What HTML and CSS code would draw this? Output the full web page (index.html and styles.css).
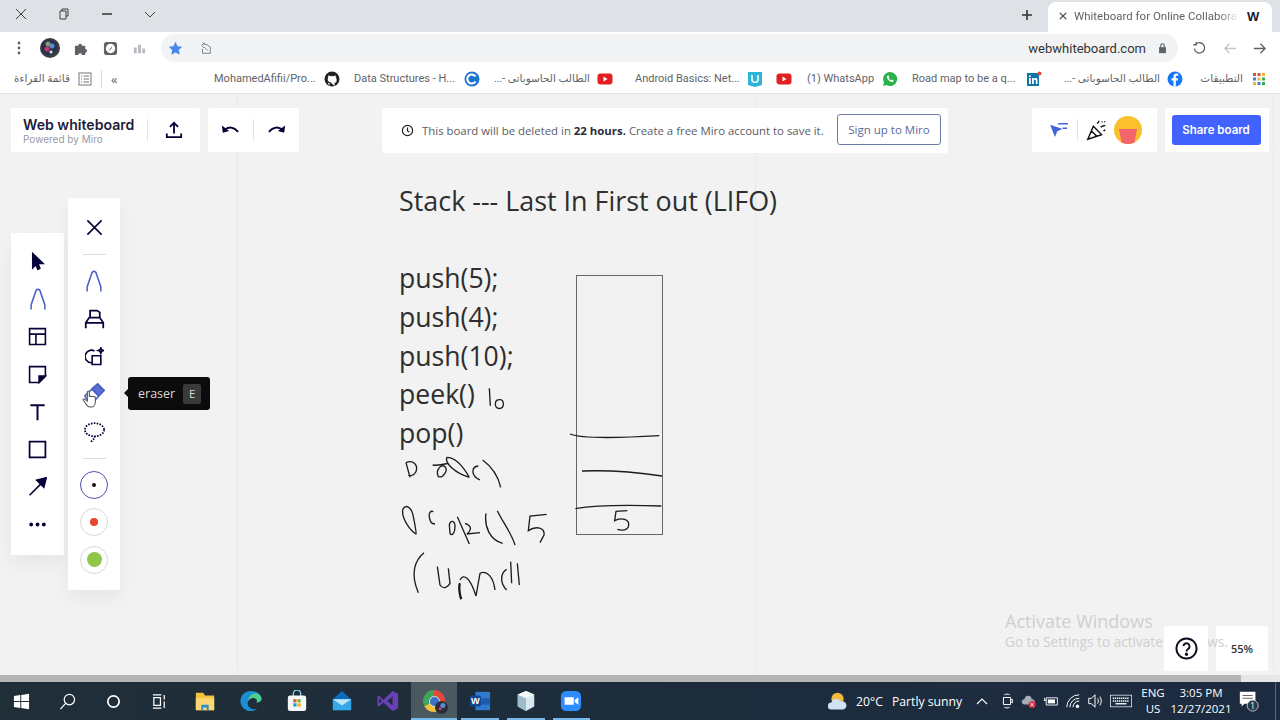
FILE: index.html
```html
<!DOCTYPE html>
<html lang="en">
<head>
  <meta charset="UTF-8">
  <title>Whiteboard for Online Collaboration</title>
  <link rel="stylesheet" href="styles.css">
</head>
<body>
  <div class="tabstrip">
    <div class="win-btns">
      <svg class="win-btn" viewBox="0 0 12 12"><path d="M1 1l10 10M11 1L1 11" /></svg>
      <svg class="win-btn" viewBox="0 0 12 12"><path d="M2 3h6v8H2zM4 3V1h6v7H8" /></svg>
      <svg class="win-btn" viewBox="0 0 12 12"><path d="M1 6h10" stroke-width="1.6" /></svg>
      <svg class="win-btn" viewBox="0 0 12 12"><path d="M1 4l5 5 5-5" /></svg>
    </div>
    <svg class="new-tab" viewBox="0 0 12 12"><path d="M6 1v10M1 6h10" /></svg>
    <div class="tab">
      <svg class="tab-close" viewBox="0 0 10 10"><path d="M1 1l8 8M9 1L1 9" /></svg>
      <span class="tab-title">Whiteboard for Online Collabora</span>
      <b class="tab-icon">W</b>
    </div>
  </div>

  <div class="toolbar">
    <svg class="kebab" viewBox="0 0 4 16"><circle cx="2" cy="3" r="1.4" /><circle cx="2" cy="8" r="1.4" /><circle cx="2" cy="13" r="1.4" /></svg>
    <div class="avatar"></div>
    <svg class="ext ext-puzzle" viewBox="0 0 16 16"><path d="M1 5h3.5a2 2 0 1 1 4 0H12v3.500a2 2 0 1 1 0 4V15H8.500a2 2 0 1 0-4 0H1z" /></svg>
    <svg class="ext ext-safari" viewBox="0 0 16 16"><rect x="1" y="1" width="14" height="14" rx="3" fill="#5f6368" /><circle cx="8" cy="8" r="5" fill="#fff" /><path d="M10 5L7 8.500 6 11l3-3z" fill="#777" /></svg>
    <svg class="ext ext-bars" viewBox="0 0 16 16"><path d="M2 7h3v6H2zM6.500 4h3v9h-3zM11 8h3v5h-3z" fill="#b5b9bd" /></svg>
    <div class="omnibox">
      <svg class="star" viewBox="0 0 16 16"><path d="M8 .8l2.200 4.700 5 .6-3.700 3.500 1 5.100L8 12.200l-4.500 2.500 1-5.100L.8 6.100l5-.6z" /></svg>
      <svg class="omni-share" viewBox="0 0 16 16"><path d="M3 5l3-3v2h3l4 3v7H4V9M6 8L3 5M6 7l4 4" /></svg>
      <span class="url">webwhiteboard.com</span>
      <svg class="lock" viewBox="0 0 12 14"><path d="M2 6h8v7H2z" fill="#5f6368" /><path d="M4 6V4a2 2 0 0 1 4 0v2" fill="none" stroke="#5f6368" stroke-width="1.3" /></svg>
    </div>
    <svg class="nav nav-reload" viewBox="0 0 16 16"><path d="M4 3.500A5.500 5.500 0 1 1 2.500 8M4.500 1v3H1.500" /></svg>
    <svg class="nav nav-back" viewBox="0 0 16 16"><path d="M14 8H2M7 3L2 8l5 5" /></svg>
    <svg class="nav nav-fwd" viewBox="0 0 16 16"><path d="M2 8h12M9 3l5 5-5 5" /></svg>
  </div>

  <div class="bookmarks">
    <span class="bm-text bm-reading" dir="rtl" lang="ar">قائمة القراءة</span>
    <svg class="bm-list" viewBox="0 0 14 14"><rect x="1" y="1" width="12" height="12" fill="none" stroke="#777" /><path d="M3 4h1M5.500 4H11M3 7h1M5.500 7H11M3 10h1M5.500 10H11" stroke="#777" /></svg>
    <i class="bm-sep"></i>
    <span class="bm-more">«</span>
    <span class="bm-text bm-1">MohamedAfifii/Pro...</span>
    <svg class="bm-icon" viewBox="0 0 16 16"><circle cx="8" cy="8" r="7.500" fill="#222" /><path d="M5.500 15v-3c-1 .3-2 0-2.500-1.500M10.500 15v-3c2-.5 2.500-2 2-4 0-1-.5-1.500-.8-2 .2-.6 0-1.500 0-1.500s-.8 0-1.700.7a6 6 0 0 0-3.500 0C5.500 4 4.300 4.500 4.300 4.500s-.2.900 0 1.500C3.800 7 3.500 8 3.800 9c.4 1.500 1.700 2.300 3 2.500" fill="#fff" /></svg>
    <span class="bm-text bm-2">Data Structures - H...</span>
    <svg class="bm-icon" viewBox="0 0 16 16"><circle cx="8" cy="8" r="7.500" fill="#1a73d0" /><path d="M11.500 5.500a4.500 4.500 0 1 0 0 5" fill="none" stroke="#fff" stroke-width="2.2" /></svg>
    <span class="bm-text bm-3" dir="rtl" lang="ar">الطالب الحاسوباتى -...</span>
    <svg class="bm-icon" viewBox="0 0 16 16"><rect x=".5" y="2.500" width="15" height="11" rx="3" fill="#e32020" /><path d="M6.500 5.500v5l4-2.500z" fill="#fff" /></svg>
    <span class="bm-text bm-4">Android Basics: Net...</span>
    <svg class="bm-icon" viewBox="0 0 16 16"><path d="M1 1h14v13l-7 2-7-2z" fill="#2cb5d8" /><path d="M5 4v5c0 3 6 3 6 0V4" fill="none" stroke="#fff" stroke-width="1.5" /></svg>
    <svg class="bm-icon bm-yt2" viewBox="0 0 16 16"><rect x=".5" y="2.500" width="15" height="11" rx="3" fill="#e32020" /><path d="M6.500 5.500v5l4-2.500z" fill="#fff" /></svg>
    <span class="bm-text bm-5">(1) WhatsApp</span>
    <svg class="bm-icon" viewBox="0 0 16 16"><path d="M8 1a7 7 0 0 0-6 10.500L1 15l3.600-1A7 7 0 1 0 8 1z" fill="#2ab34a" /><path d="M5.500 4.500c-1 1-.7 2.500.5 4s3 2.800 4.500 2.500c1-.3 1.300-1 1.200-1.500l-1.800-1-.8.800C8.500 9.500 7 8 6.700 7l.7-.8-.8-1.800z" fill="#fff" /></svg>
    <span class="bm-text bm-6">Road map to be a q...</span>
    <svg class="bm-icon" viewBox="0 0 16 16"><rect x="1" y="2" width="12" height="13" fill="#0e76a8" /><path d="M3 7h1.800v6H3zM3 4.500h1.800v1.500H3zM6 7h1.700v1c1-1.500 3.800-1.300 3.800 1v4H9.800V9.800c0-1.300-2-1.300-2 0V13H6z" fill="#fff" /><circle cx="13.500" cy="2.500" r="2" fill="#e0483a" /></svg>
    <span class="bm-text bm-7" dir="rtl" lang="ar">الطالب الحاسوباتى -...</span>
    <svg class="bm-icon" viewBox="0 0 16 16"><circle cx="8" cy="8" r="7.500" fill="#1877f2" /><path d="M8.800 15.500V9.500h2l.3-2.300H8.800V5.800c0-.7.300-1.100 1.200-1.100h1.200v-2c-2.600-.4-4.700.2-4.700 2.800v1.700H4.500v2.300h2v6z" fill="#fff" /></svg>
    <span class="bm-text bm-8" dir="rtl" lang="ar">التطبيقات</span>
    <svg class="bm-apps" viewBox="0 0 14 14"><g fill="#d9503f"><rect x="1" y="1" width="3" height="3" /><rect x="5.500" y="1" width="3" height="3" /></g><rect x="10" y="1" width="3" height="3" fill="#e8b92f" /><rect x="1" y="5.500" width="3" height="3" fill="#3f7fd9" /><rect x="5.500" y="5.500" width="3" height="3" fill="#e8b92f" /><rect x="10" y="5.500" width="3" height="3" fill="#3ea55a" /><rect x="1" y="10" width="3" height="3" fill="#e8b92f" /><rect x="5.500" y="10" width="3" height="3" fill="#3f7fd9" /><rect x="10" y="10" width="3" height="3" fill="#3ea55a" /></svg>
  </div>

  <main class="board">
    <div class="topbar">
      <div class="panel panel-brand">
        <div class="brand">
          <div class="brand-name">Web whiteboard</div>
          <div class="brand-sub">Powered by Miro</div>
        </div>
        <i class="panel-sep"></i>
        <svg class="tb-icon tb-upload" viewBox="0 0 20 20"><path d="M10 14V2M5.500 6.500L10 2l4.500 4.500M2 14v4h16v-4" /></svg>
      </div>
      <div class="panel panel-history">
        <svg class="tb-icon" viewBox="0 0 20 20"><path d="M1 5l1 8 7-2z" fill="#050038" stroke="none" /><path d="M4 10c4-4 10-4 15 2" /></svg>
        <i class="panel-sep"></i>
        <svg class="tb-icon" viewBox="0 0 20 20"><path d="M19 5l-1 8-7-2z" fill="#050038" stroke="none" /><path d="M16 10C12 6 6 6 1 12" /></svg>
      </div>
      <div class="panel panel-notice">
        <svg class="clock" viewBox="0 0 14 14"><circle cx="7" cy="7" r="5.500" /><path d="M7 3.800V7.500l2 1.200" /></svg>
        <span class="notice-text">This board will be deleted in <b>22 hours.</b> Create a free Miro account to save it.</span>
        <span class="signup">Sign up to Miro</span>
      </div>
      <div class="panel panel-collab">
        <svg class="collab-arrow" viewBox="0 0 22 18"><path d="M1 3l14 5-6 2.500L6.500 17z" fill="#4262d8" /><path d="M10 2h11M15 7h5" stroke="#4262d8" stroke-width="1.6" fill="none" /></svg>
        <i class="panel-sep"></i>
        <svg class="collab-party" viewBox="0 0 24 24"><path d="M2 22L8 8l9 9zM6 13l6 6M12 5c1-1 2-1 2-3M16 9c2-2 3-1 5-2M19 13l2-1M17 3h1M20 3h1" /></svg>
        <div class="face"><span class="face-mouth"></span></div>
      </div>
      <div class="panel panel-share">
        <span class="share-btn">Share board</span>
      </div>
    </div>

    <div class="toolbars">
      <div class="tool-panel tool-main">
        <div class="tool"><svg viewBox="0 0 24 24"><path d="M6 2l13 12.500h-6.500l2.500 6-2.500 1.500-2.500-6L6 20z" fill="#050038" /></svg></div>
        <div class="tool"><svg class="blue" viewBox="0 0 24 24"><path d="M4.500 23.500v-5L10 2.500Q12 .5 14 2.500L19.500 18.500v5" /></svg></div>
        <div class="tool"><svg viewBox="0 0 24 24"><path d="M2 2h20v20H2zM2 9h20M10 9v13" /></svg></div>
        <div class="tool"><svg viewBox="0 0 24 24"><path d="M22 14V2H2v20h12z" /><path d="M22 14h-8v8z" fill="#050038" /></svg></div>
        <div class="tool"><svg viewBox="0 0 24 24"><path d="M3 4h18M12 4v19" stroke-width="2.5" /></svg></div>
        <div class="tool"><svg viewBox="0 0 24 24"><path d="M2 2h20v20H2z" stroke-width="2.2" /></svg></div>
        <div class="tool"><svg viewBox="0 0 24 24"><path d="M2 23L16 9" /><path d="M23 1l-12 3 9 9z" fill="#050038" /></svg></div>
        <div class="tool"><svg viewBox="0 0 24 24"><circle cx="4" cy="12" r="2.400" fill="#050038" stroke="none" /><circle cx="12" cy="12" r="2.400" fill="#050038" stroke="none" /><circle cx="20" cy="12" r="2.400" fill="#050038" stroke="none" /></svg></div>
      </div>
      <div class="tool-panel tool-pen">
        <div class="tool"><svg viewBox="0 0 24 24"><path d="M3 3l18 18M21 3L3 21" /></svg></div>
        <div class="tool-sep"></div>
        <div class="tool"><svg class="blue" viewBox="0 0 24 24"><path d="M4.500 23.500v-5L10 2.500Q12 .5 14 2.500L19.500 18.500v5" /></svg></div>
        <div class="tool"><svg class="wide" viewBox="0 0 24 24"><path d="M2 23v-6l4-6h12l4 6v6M7 11V3h8l3 2v6M2 17h20" /></svg></div>
        <div class="tool"><svg viewBox="0 0 24 24"><path d="M12 5a8 8 0 1 0-4 15M9 11h11v11H9zM20 1l1 2.500 2.500 1-2.500 1-1 2.500-1-2.500-2.500-1 2.500-1z" /></svg></div>
        <div class="tool"><svg class="blue" viewBox="0 0 24 24"><path d="M10 6l6-5 7 7-6 6z" fill="#5a70d0" /><path d="M2 14L16 1l7 7L10 22H7zM10 7l7 7" /></svg></div>
        <div class="tool"><svg class="wide" viewBox="0 0 24 24"><ellipse cx="12" cy="10" rx="11" ry="7.500" stroke-dasharray="1.800 1.500" stroke-width="2" /><path d="M12 17c1 3-2 4-4 7" stroke-dasharray="1.800 1.500" stroke-width="2" /></svg></div>
        <div class="tool-sep"></div>
        <div class="tool"><span class="swatch swatch-on"><i class="dot dot-black"></i></span></div>
        <div class="tool"><span class="swatch"><i class="dot dot-red"></i></span></div>
        <div class="tool"><span class="swatch"><i class="dot dot-green"></i></span></div>
      </div>
    </div>

    <svg class="hand" viewBox="0 0 24 28"><path d="M8 17V4c0-2.500 3-2.500 3 0v7c0-1.500 3-1.500 3 0 0-1.500 3-1.500 3 0 0-1 3-1 3 1v6c0 5-3 8-6 8h-2c-4 0-5-3-7-6l-3-4c-1-2 1-3 3-1z" /></svg>
    <div class="tooltip">eraser <kbd class="key">E</kbd></div>

    <div class="sticky-title">Stack --- Last In First out (LIFO)</div>
    <div class="code-lines">
      <div>push(5);</div>
      <div>push(4);</div>
      <div>push(10);</div>
      <div>peek()</div>
      <div>pop()</div>
    </div>
    <div class="stack-box"></div>
    <svg class="ink" viewBox="0 0 900 720">
      <path d="M328 55l3 52M347 95c-4 15 4 22 14 20 12-3 12-24 0-26-6-1-12 2-14 6" />
      <path d="M570 192c30 13 130 13 268 5M606 303c74-3 154 2 240 15M586 416c64-11 174-11 258-8" />
      <path d="M742 422l-34 2-4 28c21-12 44-2 42 13-1 17-21 17-34 13" />
      <path d="M78 278l12 44M78 278c22-10 37 7 30 27-8 13-18 13-23 10" />
      <path d="M175 320c-10-20 10-40 20-30 10 10-5 35-20 30zM158 285c17 3 37-3 47-5M200 262c25 0 50 28 68 60M200 262c-5 18 25 48 68 60M295 288c-20 2-25 27 5 42M308 270c27 20 47 50 54 82" />
      <path d="M68 420c7-20 27-10 32 20 5 25 10 50 8 52-13-7-43-42-40-72zM160 425c-8-5-14 5-12 15 1 15 6 22 17 22" />
      <path d="M208 465c2-15 17-15 17 5s-10 30-15 20zM232 440l36 82M255 460c30 10 10 30 5 32l40-4M318 430c-6 40 12 80 50 90M352 422c18 38 43 68 53 103M500 433l-50 5-5 44c25-17 50-7 47 13l-12 23" />
      <path d="M132 548c-27 22-42 62-17 120M172 590l8 55c10 15 25 5 30-5l-5-45" />
      <path d="M240 640c-5 10 0 40 4 48" stroke-width="7" />
      <path d="M240 630c10-20 30-10 48 48l12-68c20-10 40 10 45 50M380 598c-20 12-20 42 0 62M392 575l3 65M412 580l6 65" />
    </svg>

    <div class="panel panel-zoom">55%</div>
    <div class="activate">
      <div class="activate-title">Activate Windows</div>
      <div class="activate-sub">Go to Settings to activate Windows.</div>
    </div>
    <div class="panel panel-help">
      <svg class="help" viewBox="0 0 24 24"><circle cx="12" cy="12" r="10.500" /><path d="M8.800 9.500A3.200 3.200 0 1 1 13.500 12.500c-1 .6-1.500 1.200-1.500 2.500" /><circle cx="12" cy="18" r=".8" /></svg>
    </div>
  </main>

  <div class="scrollbar"><div class="scroll-thumb"></div></div>

  <footer class="taskbar">
    <div class="task-apps">
      <div class="task"><svg viewBox="0 0 18 18"><path d="M1 3.200l6.700-1V8.500H1zM8.700 2l8.300-1.200V8.500H8.700zM1 9.500h6.700v6.300l-6.700-1zM8.700 9.500H17v7.700L8.700 16z" fill="#fff" /></svg></div>
      <div class="task"><svg viewBox="0 0 18 18"><circle cx="11" cy="7" r="5.500" fill="none" stroke="#fff" stroke-width="1.3" /><path d="M7 11l-5.500 6" stroke="#fff" stroke-width="1.3" /></svg></div>
      <div class="task"><svg viewBox="0 0 18 18"><circle cx="9" cy="9" r="6" fill="none" stroke="#fff" stroke-width="1.8" /></svg></div>
      <div class="task"><svg viewBox="0 0 18 18"><path d="M2 2h9M2 16h9M3 5h7v8H3zM14 2v5M14 9v7" fill="none" stroke="#fff" stroke-width="1.3" /></svg></div>
      <div class="task"><svg class="app" viewBox="0 0 24 24"><path d="M2 3h8l2 3h10v16H2z" fill="#f3c33e" /><path d="M2 9h20v13H2z" fill="#fbd774" /><path d="M8 22v-6h8v6h-2v-3h-4v3z" fill="#2b8ed0" /></svg></div>
      <div class="task"><svg class="app" viewBox="0 0 24 24"><path d="M12 1C5 1 .5 6 .5 12c0 7 6 11 11 11 3 0 5.500-1 7.500-2.500-5 1.500-10-1-10.500-5C8 11 12 8 16 9c3 .8 3 3 2 4.500 3 0 5.500-1.500 5.500-4C23.500 5 18 1 12 1z" fill="#1b8ed6" /><path d="M23.500 9.500c0 2.500-2.500 4-5.500 4 1-1.500 1-3.700-2-4.500-3-.7-6 .5-7 3 0-5 4-8.500 8-8.500 3 0 6 2.500 6.500 6z" fill="#4dd08a" /></svg></div>
      <div class="task"><svg class="app" viewBox="0 0 24 24"><path d="M8 7V4a4 4 0 0 1 8 0v3" fill="none" stroke="#7fd0e8" stroke-width="1.5" /><rect x="2" y="6" width="20" height="17" rx="2.500" fill="#f4f6f7" /><path d="M8 10h3.500v3.500H8z" fill="#e0562c" /><path d="M12.500 10H16v3.500h-3.500z" fill="#76b82a" /><path d="M8 14.500h3.500V18H8z" fill="#1c93d9" /><path d="M12.500 14.500H16V18h-3.500z" fill="#f7b500" /></svg></div>
      <div class="task"><svg class="app" viewBox="0 0 24 24"><path d="M12 1l10 9v12H2V10z" fill="#0a6dbb" /><path d="M2 10h20v12H2z" fill="#35a8e8" /><path d="M2 10l10 7 10-7" fill="#bfe6fa" /></svg></div>
      <div class="task"><svg class="app" viewBox="0 0 24 24"><path d="M17 1l6 3v16l-6 3L7 13.500 2 18l-1.500-1v-10L2 6l5 4.500z" fill="#6b3fb5" /><path d="M17 7v10l-6-5z" fill="#1e2e3a" /><path d="M2.500 9v6l3-3z" fill="#1e2e3a" /></svg></div>
      <div class="task task-on"><span class="chrome-ic"><span class="chrome-core"></span><span class="chrome-badge"></span></span></div>
      <div class="task task-word"><svg class="app" viewBox="0 0 24 24"><path d="M7 2h16v20H7z" fill="#2f7ad1" /><path d="M7 9h16v7H7z" fill="#1c5cac" /><rect x="1" y="6" width="12" height="12" rx="1" fill="#11478f" /><text x="7" y="15.500" class="word-w">W</text></svg></div>
      <div class="task"><svg class="app" viewBox="0 0 24 24"><path d="M12 1l9 4v13l-9 5-9-5V5z" fill="#d8e6ee" /><path d="M12 9v14l-9-5V5z" fill="#9dbccc" /><path d="M12 1l9 4-9 4-9-4z" fill="#f2f7fa" /></svg></div>
      <div class="task"><svg class="app" viewBox="0 0 24 24"><rect x="1" y="1" width="22" height="22" rx="6" fill="#2d8cff" /><path d="M5 8h10v8H5zM16 11l4-3v8l-4-3z" fill="#fff" /></svg></div>
    </div>
    <div class="tray">
      <svg class="tray-weather" viewBox="0 0 24 24"><circle cx="12" cy="9" r="7" fill="#f5b93b" /><path d="M5 21a4 4 0 0 1 0-8 6 6 0 0 1 11-1 4.500 4.500 0 0 1 3 9z" fill="#cfe3f2" /></svg>
      <span class="tray-temp">20°C</span>
      <span class="tray-cond">Partly sunny</span>
      <svg class="tray-ic tray-chevron" viewBox="0 0 14 14"><path d="M2 10l5-5 5 5" /></svg>
      <svg class="tray-ic" viewBox="0 0 14 18"><path d="M3 5h8v8H3zM11 8l2-1v4l-2-1M4 2c2-1 4-1 6 0M4 16c2 1 4 1 6 0" /></svg>
      <svg class="tray-ic" viewBox="0 0 18 18"><path d="M1 11a3 3 0 0 1 3-4 4 4 0 0 1 8 0 3 3 0 0 1 1 6H4a3 3 0 0 1-3-2z" fill="#a7adb3" stroke="none" /><circle cx="12.500" cy="13" r="4" fill="#d8344a" stroke="none" /><path d="M11 11.500l3 3M14 11.500l-3 3" stroke="#fff" /></svg>
      <svg class="tray-ic" viewBox="0 0 20 14"><path d="M4 3h14v9H4zM1 6h3M2 3v4" /><path d="M6 5h9v5H6z" fill="#fff" stroke="none" /></svg>
      <svg class="tray-ic" viewBox="0 0 18 18"><path d="M2 16a14 14 0 0 1 14-14M5.500 16A10 10 0 0 1 16 6M9 16a7 7 0 0 1 7-7" /><circle cx="14" cy="15" r="1.500" fill="#fff" /></svg>
      <svg class="tray-ic" viewBox="0 0 18 18"><path d="M2 6h3l4-4v14l-4-4H2zM12 6c1 2 1 4 0 6M14.500 4c2 3 2 7 0 10" /></svg>
      <svg class="tray-kbd" viewBox="0 0 32 18"><rect x=".5" y=".5" width="31" height="17" fill="none" stroke="#fff" /><path d="M4 5h24M4 9h24" stroke="#fff" stroke-width="2" stroke-dasharray="2 1" /><path d="M8 13h16" stroke="#fff" stroke-width="2" /></svg>
      <div class="tray-lang">ENG<br>US</div>
      <div class="tray-clock">3:05 PM<br>12/27/2021</div>
      <svg class="tray-notif" viewBox="0 0 24 24"><path d="M2 2h17v13H7l-3 3v-3H2z" fill="#fff" /><path d="M5 6h11M5 9h11" stroke="#555" /><circle cx="16" cy="17" r="6" fill="#2a3a47" stroke="#c9ced2" /><text x="16" y="20.500" class="notif-count">1</text></svg>
      <i class="show-desktop"></i>
    </div>
  </footer>
</body>
</html>
```

FILE: styles.css
```css
* {
  box-sizing: border-box;
}
body {
  margin: 0;
  width: 1280px;
  height: 720px;
  overflow: hidden;
  display: flex;
  flex-direction: column;
  font-family: "Open Sans", sans-serif;
  background-color: #f2f2f2;
}
svg {
  display: block;
  flex: none;
}

/* browser chrome */
.tabstrip {
  height: 32px;
  background-color: #dee1e6;
  display: flex;
  align-items: flex-end;
  flex: none;
}
.win-btns {
  display: flex;
  align-self: center;
  padding-left: 15px;
  gap: 31px;
  margin-bottom: 4px;
}
.win-btn {
  width: 12px;
  height: 12px;
  fill: none;
  stroke: #3c4043;
}
.new-tab {
  width: 12px;
  height: 12px;
  margin: 0 0 11px auto;
  fill: none;
  stroke: #333;
  stroke-width: 1.6;
}
.tab {
  width: 224px;
  height: 30px;
  margin: 0 8px 0 15px;
  background-color: #fff;
  border-radius: 8px 8px 0 0;
  display: flex;
  align-items: center;
  padding: 0 10px 2px 11px;
}
.tab-close {
  width: 8px;
  height: 8px;
  fill: none;
  stroke: #444;
  stroke-width: 1.5;
}
.tab-title {
  font-family: Roboto, sans-serif;
  font-size: 11.5px;
  color: #5f6368;
  margin-left: 7px;
  width: 165px;
  white-space: nowrap;
  overflow: hidden;
  -webkit-mask-image: linear-gradient(90deg, #000 88%, transparent);
  mask-image: linear-gradient(90deg, #000 88%, transparent);
}
.tab-icon {
  font-family: "Liberation Sans", sans-serif;
  font-size: 13px;
  margin-left: 8px;
  color: #1c1c30;
}
.toolbar {
  height: 32px;
  flex: none;
  background-color: #fff;
  display: flex;
  align-items: center;
  padding-left: 17px;
}
.kebab {
  width: 4px;
  height: 16px;
  fill: #5f6368;
}
.avatar {
  width: 20px;
  height: 20px;
  margin-left: 19px;
  border-radius: 50%;
  background:
    radial-gradient(circle at 35% 55%, #c23a6a 0 2px, transparent 3px),
    radial-gradient(circle at 60% 40%, #5a8ad8 0 2px, transparent 3px),
    radial-gradient(circle at 55% 70%, #d8d8e8 0 1px, transparent 2px),
    radial-gradient(circle at 40% 30%, #7fa06a 0 2px, transparent 3px),
    radial-gradient(circle at 45% 45%, #2c2c50 0 40%, #3a4a36 70%, #6d7a58 100%);
}
.ext {
  width: 15px;
  height: 15px;
  margin-left: 14px;
}
.ext-puzzle {
  fill: #5f6368;
}
.omnibox {
  width: 1017px;
  height: 28px;
  margin-left: 14px;
  background-color: #f1f3f4;
  border-radius: 14px;
  display: flex;
  align-items: center;
  padding: 0 10px 0 7px;
}
.star {
  width: 15px;
  height: 15px;
  fill: #4b86ea;
}
.omni-share {
  width: 14px;
  height: 14px;
  margin-left: 16px;
  fill: none;
  stroke: #70757a;
}
.url {
  margin-left: auto;
  font-family: Roboto, sans-serif;
  font-size: 13px;
  color: #333;
}
.lock {
  width: 11px;
  height: 12px;
  margin-left: 11px;
}
.nav {
  width: 15px;
  height: 15px;
  fill: none;
  stroke: #5f6368;
  stroke-width: 1.4;
}
.nav-reload {
  margin-left: 14px;
}
.nav-back {
  margin-left: 16px;
  stroke: #c4c7ca;
}
.nav-fwd {
  margin-left: 14px;
}
.bookmarks {
  height: 30px;
  flex: none;
  background-color: #fff;
  border-bottom: 1px solid #e3e3e3;
  display: flex;
  align-items: center;
  padding-left: 13px;
}
.bm-text {
  font-family: Roboto, "DejaVu Sans", sans-serif;
  font-size: 11px;
  color: #5f6368;
  white-space: nowrap;
  overflow: hidden;
}
.bm-icon {
  width: 16px;
  height: 16px;
  margin-left: 7px;
}
.bm-reading {
  width: 57px;
  font-size: 10.5px;
}
.bm-list {
  width: 14px;
  height: 14px;
  margin-left: 8px;
}
.bm-sep {
  width: 1px;
  height: 18px;
  margin-left: 9px;
  background-color: #ddd;
}
.bm-more {
  margin-left: 9px;
  width: 12px;
  font-size: 13px;
  color: #5f6368;
}
.bm-1 {
  margin-left: 91px;
  width: 103px;
}
.bm-2 {
  margin-left: 14px;
  width: 103px;
}
.bm-3 {
  margin-left: 14px;
  width: 96px;
  font-size: 10.5px;
}
.bm-4 {
  margin-left: 22px;
  width: 105px;
}
.bm-yt2 {
  margin-left: 13px;
}
.bm-5 {
  margin-left: 15px;
  width: 68px;
}
.bm-6 {
  margin-left: 14px;
  width: 107px;
}
.bm-7 {
  margin-left: 15px;
  width: 103px;
  font-size: 10.5px;
}
.bm-8 {
  margin-left: 15px;
  width: 45px;
  font-size: 10.5px;
}
.bm-apps {
  width: 14px;
  height: 14px;
  margin-left: 9px;
}

/* board */
.board {
  position: relative;
  flex: 1;
  background-color: #f2f2f2;
  background-image:
    linear-gradient(#eeeeee 1px, transparent 1px),
    linear-gradient(90deg, #e9e9e9 1px, transparent 1px);
  background-size: 518px 518px;
  background-position: 237px 53px;
}
.topbar {
  position: absolute;
  top: 14px;
  left: 11px;
  right: 11px;
  display: flex;
  gap: 8px;
}
.panel {
  background-color: #fff;
  height: 44px;
  border-radius: 2px;
  display: flex;
  align-items: center;
}
.panel-sep {
  width: 1px;
  height: 22px;
  background-color: #e3e3e6;
}
.panel-brand {
  width: 189px;
  padding-left: 12px;
}
.brand {
  width: 124px;
}
.brand-name {
  font-family: Inter, sans-serif;
  font-size: 14.1px;
  font-weight: 600;
  line-height: 17px;
  color: #1c1c3a;
  white-space: nowrap;
}
.brand-sub {
  font-family: Inter, sans-serif;
  font-size: 10px;
  line-height: 12px;
  color: #9a9aa4;
}
.tb-icon {
  width: 18px;
  height: 18px;
  fill: none;
  stroke: #050038;
  stroke-width: 2;
}
.tb-upload {
  margin-left: 17px;
}
.panel-history {
  width: 91px;
  justify-content: center;
  gap: 14px;
}
.panel-notice {
  width: 566px;
  height: 45px;
  margin-left: 75px;
  padding-left: 19px;
}
.clock {
  width: 13px;
  height: 13px;
  fill: none;
  stroke: #222;
  stroke-width: 1.3;
}
.notice-text {
  margin-left: 8px;
  width: 415px;
  font-size: 11.4px;
  color: #5b5b66;
  white-space: nowrap;
}
.notice-text b {
  color: #2b2b3a;
}
.signup {
  width: 104px;
  height: 31px;
  margin-bottom: 2px;
  border: 1px solid #6b7aa6;
  border-radius: 3px;
  font-size: 11.5px;
  color: #5d6a9c;
  display: flex;
  align-items: center;
  justify-content: center;
}
.panel-collab {
  width: 125px;
  margin-left: auto;
  padding-left: 17px;
}
.collab-arrow {
  width: 20px;
  height: 16px;
}
.panel-collab .panel-sep {
  margin-left: 8px;
}
.collab-party {
  width: 22px;
  height: 22px;
  margin-left: 8px;
  fill: none;
  stroke: #111;
  stroke-width: 1.6;
}
.face {
  width: 28px;
  height: 28px;
  margin-left: 6px;
  border-radius: 50%;
  background-color: #fbc02d;
  position: relative;
  overflow: hidden;
}
.face-mouth {
  position: absolute;
  left: 5px;
  top: 13px;
  width: 18px;
  height: 15px;
  background-color: #f2656a;
  clip-path: polygon(0 0, 100% 0, 85% 100%, 15% 100%);
}
.panel-share {
  width: 104px;
  justify-content: center;
  padding-right: 2px;
}
.share-btn {
  width: 89px;
  height: 30px;
  background-color: #4262ff;
  border-radius: 3px;
  color: #fff;
  font-family: Inter, sans-serif;
  font-size: 11.5px;
  font-weight: 600;
  display: flex;
  align-items: center;
  justify-content: center;
}

/* left tools */
.toolbars {
  position: absolute;
  left: 11px;
  top: 104px;
  display: flex;
  gap: 4px;
  align-items: flex-start;
}
.tool-panel {
  width: 53px;
  background-color: #fff;
  padding: 10px 0;
  box-shadow: 0 8px 18px rgba(0, 0, 0, 0.05);
}
.tool-main {
  margin-top: 35px;
  height: 322px;
}
.tool-pen {
  width: 52px;
  height: 392px;
  padding: 11px 0;
}
.tool {
  height: 37.5px;
  display: flex;
  align-items: center;
  justify-content: center;
}
.tool svg {
  width: 19px;
  height: 19px;
  fill: none;
  stroke: #050038;
  stroke-width: 2;
}
.tool svg.wide {
  width: 21px;
  height: 21px;
}
.tool svg.blue {
  width: 22px;
  height: 22px;
  stroke: #4a62c8;
  stroke-width: 1.7;
}
.tool-sep {
  height: 16px;
  display: flex;
  align-items: center;
  justify-content: center;
}
.tool-sep::before {
  content: "";
  width: 23px;
  height: 1px;
  background-color: #ddd;
}
.swatch {
  width: 28px;
  height: 28px;
  border-radius: 50%;
  border: 1px solid #d9d9d9;
  display: flex;
  align-items: center;
  justify-content: center;
}
.swatch-on {
  border: 1.5px solid #4a52b0;
}
.dot {
  border-radius: 50%;
}
.dot-black {
  width: 4px;
  height: 4px;
  background-color: #111;
}
.dot-red {
  width: 8px;
  height: 8px;
  background-color: #e8452c;
}
.dot-green {
  width: 15px;
  height: 15px;
  background-color: #8fc648;
}
.hand {
  position: absolute;
  left: 82px;
  top: 295px;
  width: 16px;
  height: 20px;
  fill: #fff;
  stroke: #555;
  stroke-width: 1.6;
}
.tooltip {
  position: absolute;
  left: 128px;
  top: 283px;
  width: 82px;
  height: 33px;
  background-color: #0c0c0c;
  border-radius: 3px;
  color: #d8d8d8;
  font-size: 12.5px;
  display: flex;
  align-items: center;
  padding-left: 10px;
  gap: 8px;
}
.tooltip::before {
  content: "";
  position: absolute;
  left: -4px;
  top: 12px;
  border: 4px solid transparent;
  border-left: 0;
  border-right-color: #0c0c0c;
}
.key {
  width: 18px;
  height: 20px;
  background-color: #3a3a3a;
  border-radius: 2px;
  font-family: "Open Sans", sans-serif;
  font-size: 11.5px;
  text-align: center;
  line-height: 20px;
}

/* items on the board */
.sticky-title {
  position: absolute;
  left: 399px;
  top: 88px;
  font-size: 26.9px;
  line-height: 38px;
  color: #2e2e2e;
  white-space: nowrap;
}
.code-lines {
  position: absolute;
  left: 399px;
  top: 165px;
  font-size: 26.6px;
  line-height: 38.8px;
  color: #2e2e2e;
}
.stack-box {
  position: absolute;
  left: 576px;
  top: 181px;
  width: 87px;
  height: 260px;
  border: 1px solid #666;
}
.ink {
  position: absolute;
  left: 380px;
  top: 276px;
  width: 300px;
  height: 240px;
  fill: none;
  stroke: #1c1c1c;
  stroke-width: 4;
}
.activate {
  position: absolute;
  left: 1005px;
  top: 516px;
  color: #cfcfcf;
  white-space: nowrap;
}
.activate-title {
  font-size: 18px;
  line-height: 22px;
}
.activate-sub {
  font-size: 13.6px;
  line-height: 20px;
}
.panel-help {
  position: absolute;
  left: 1164px;
  top: 532px;
  width: 44px;
  height: 45px;
  justify-content: center;
}
.help {
  width: 23px;
  height: 23px;
  fill: none;
  stroke: #0d0d1f;
  stroke-width: 2;
}
.panel-zoom {
  position: absolute;
  left: 1216px;
  top: 532px;
  width: 52px;
  height: 45px;
  justify-content: center;
  font-size: 11px;
  font-weight: 600;
  color: #333;
}
.scrollbar {
  height: 7px;
  flex: none;
  background-color: #e6e6e6;
}
.scroll-thumb {
  width: 1241px;
  height: 100%;
  background-color: #b5b5b5;
}

/* windows taskbar */
.taskbar {
  height: 38px;
  flex: none;
  background: linear-gradient(90deg, #1f2e37, #1c2b40);
  display: flex;
  color: #fff;
}
.task-apps {
  display: flex;
  margin-left: -1px;
}
.task {
  width: 45.8px;
  height: 38px;
  display: flex;
  align-items: center;
  justify-content: center;
  position: relative;
}
.task svg {
  width: 17px;
  height: 17px;
}
.task svg.app {
  width: 22px;
  height: 22px;
}
.task-on {
  background-color: #4a5860;
}
.task-on::after,
.task-on ~ .task::after {
  content: "";
  position: absolute;
  left: 4px;
  right: 4px;
  bottom: 0;
  height: 2px;
  background-color: #76b9ed;
}
.task-on::after {
  left: 0;
  right: 0;
}
.word-w {
  font-family: "Liberation Sans", sans-serif;
  font-size: 10px;
  font-weight: 700;
  fill: #fff;
  text-anchor: middle;
}
.chrome-ic {
  width: 22px;
  height: 22px;
  border-radius: 50%;
  background: conic-gradient(#e5493a 0 120deg, #f3c13a 120deg 240deg, #3ea55a 240deg);
  display: flex;
  align-items: center;
  justify-content: center;
  position: relative;
}
.chrome-core {
  width: 11px;
  height: 11px;
  border-radius: 50%;
  background-color: #3b70c4;
  border: 1px solid #dfe5ea;
}
.chrome-badge {
  position: absolute;
  right: -3px;
  bottom: -2px;
  width: 13px;
  height: 13px;
  border-radius: 50%;
  background:
    radial-gradient(circle at 40% 60%, #c23a6a 0 1px, transparent 2px),
    radial-gradient(circle at 60% 35%, #5a8ad8 0 2px, transparent 3px),
    #2a2f35;
}
.tray {
  margin-left: auto;
  display: flex;
  align-items: center;
  font-family: "Open Sans", sans-serif;
  font-size: 12.2px;
}
.tray-weather {
  width: 21px;
  height: 21px;
}
.tray-temp {
  margin-left: 8px;
  width: 36px;
}
.tray-cond {
  width: 78px;
}
.tray-ic {
  width: 16px;
  height: 16px;
  margin-right: 6px;
  fill: none;
  stroke: #fff;
  stroke-width: 1.1;
}
.tray-chevron {
  margin-left: 5px;
  margin-right: 10px;
  width: 14px;
  height: 14px;
}
.tray-kbd {
  width: 22px;
  height: 14px;
  margin-left: 1px;
}
.tray-lang {
  width: 32px;
  margin-left: 5px;
  text-align: center;
  font-size: 11.5px;
  line-height: 16px;
}
.tray-clock {
  width: 64px;
  text-align: center;
  font-size: 11.5px;
  line-height: 16px;
}
.tray-notif {
  width: 22px;
  height: 22px;
  margin-left: 5px;
}
.notif-count {
  font-size: 9px;
  fill: #fff;
  text-anchor: middle;
  stroke: none;
}
.show-desktop {
  width: 1px;
  height: 38px;
  margin-left: 15px;
  margin-right: 4px;
  background-color: #5a6670;
}
```
